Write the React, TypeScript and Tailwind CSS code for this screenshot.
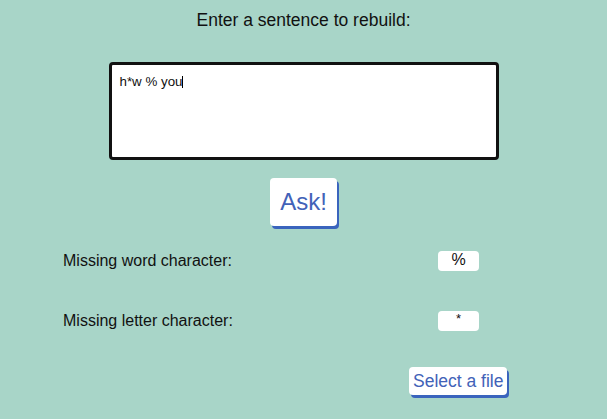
import React from "react";

export default function App() {
  return (
    <div className="min-h-screen w-full bg-[#a8d5c8] font-['Liberation_Sans',Arial,sans-serif] text-black">
      <div className="flex flex-col items-center">
        <p className="mt-[10px] text-[17.5px] leading-[20px] text-[#111]">
          Enter a sentence to rebuild:
        </p>
        <div className="mt-[32px] box-border h-[98px] w-[390px] rounded-[4px] border-[3px] border-[#111] bg-white px-[8px] pt-[9px] text-[13.33px] leading-[15px] text-[#111]">
          <span>h*w % you</span>
          <span className="inline-block h-[12px] w-px translate-y-[2px] bg-black align-baseline" />
        </div>
        <button className="mt-[18px] rounded-[4px] bg-white px-[10px] py-[10px] text-[24px] leading-[28px] text-[#4262b8] shadow-[2px_3px_0_#3a64bd]">
          Ask!
        </button>
        <div className="mt-[25px] flex h-[20px] w-full items-center">
          <span className="ml-[63px] w-[375px] text-[16px] leading-[20px] text-[#111]">
            Missing word character:
          </span>
          <div className="h-[20px] w-[41px] rounded-[4px] bg-white text-center text-[16px] leading-[18px] text-[#111]">
            %
          </div>
        </div>
        <div className="mt-[40px] flex h-[20px] w-full items-center">
          <span className="ml-[63px] w-[375px] text-[16px] leading-[20px] text-[#111]">
            Missing letter character:
          </span>
          <div className="h-[20px] w-[41px] rounded-[4px] bg-white text-center text-[13px] leading-[15px] text-[#111]">
            *
          </div>
        </div>
        <button className="ml-[409px] mt-[36px] self-start rounded-[4px] bg-white px-[4px] py-[4px] text-[17.5px] leading-[20px] text-[#4262b8] shadow-[2px_3px_0_#3a64bd]">
          Select a file
        </button>
      </div>
    </div>
  );
}
